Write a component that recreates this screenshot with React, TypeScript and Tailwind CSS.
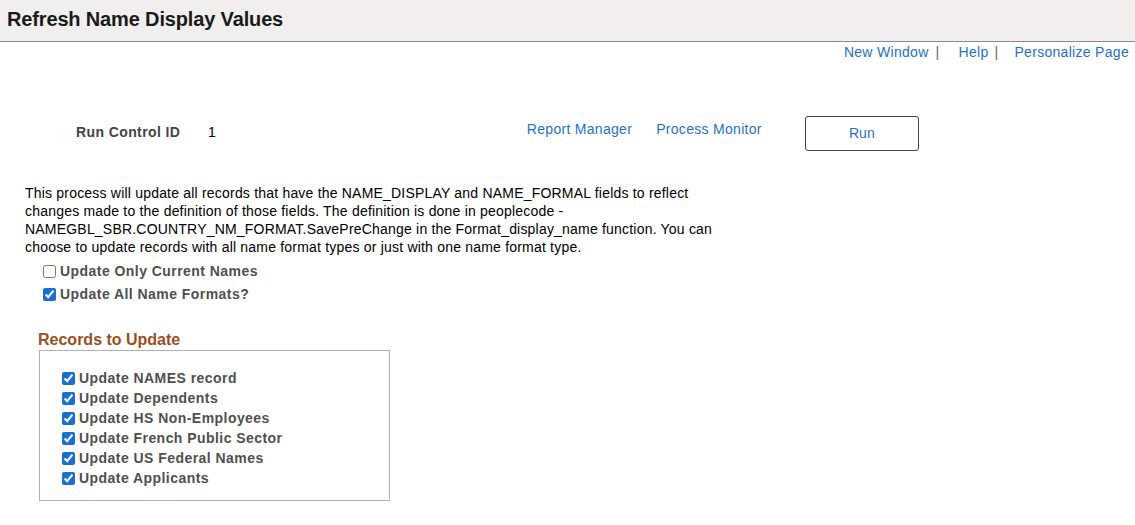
import { useState } from 'react';

const records = [
  'Update NAMES record',
  'Update Dependents',
  'Update HS Non-Employees',
  'Update French Public Sector',
  'Update US Federal Names',
  'Update Applicants',
];

const Check = ({ label, initial }: { label: string; initial: boolean }) => {
  const [checked, setChecked] = useState(initial);
  return (
    <label className="flex items-center gap-[4px] text-[14px] font-bold tracking-[0.45px] text-[#4f4f4f] leading-[20px]">
      <input
        type="checkbox"
        checked={checked}
        onChange={() => setChecked(!checked)}
        className="m-0 h-[13px] w-[13px] accent-[#1a6fd6]"
      />
      {label}
    </label>
  );
};

export default function App() {
  return (
    <div className="min-h-[525px] bg-white font-['Liberation_Sans',Arial,sans-serif] text-black">
      <div className="h-[42px] border-b border-[#8a8a8a] bg-[#f0efee] pl-[7px] pt-[6px]">
        <h1 className="text-[20px] font-bold leading-[26px] tracking-[-0.15px] text-[#1a1a1a]">Refresh Name Display Values</h1>
      </div>

      <div className="flex justify-end pr-[6px] pt-[1px] text-[14px] leading-[18px] tracking-[0.3px] text-[#1f72c6]">
        <a className="cursor-pointer">New Window</a>
        <span className="ml-[7px] mr-[19px] text-[#666]">|</span>
        <a className="cursor-pointer">Help</a>
        <span className="ml-[6px] mr-[16px] text-[#666]">|</span>
        <a className="cursor-pointer">Personalize Page</a>
      </div>

      <div className="mt-[53px] flex items-center">
        <div className="ml-[76px] w-[132px] text-[14px] font-bold tracking-[0.4px] text-[#444]">Run Control ID</div>
        <div className="text-[14px]">1</div>
        <a className="ml-[311px] -mt-[7px] cursor-pointer text-[14px] tracking-[0.3px] text-[#1f72c6]">Report Manager</a>
        <a className="ml-[24px] -mt-[7px] cursor-pointer text-[14px] tracking-[0.3px] text-[#1f72c6]">Process Monitor</a>
        <button className="ml-[43px] mt-[2px] h-[35px] w-[114px] rounded-[3px] border border-[#444] bg-white text-[14px] text-[#1f72c6]">
          Run
        </button>
      </div>

      <p className="ml-[25px] mt-[33px] w-[720px] text-[14px] leading-[18px] tracking-[0.2px]">
        This process will update all records that have the NAME_DISPLAY and NAME_FORMAL fields to reflect
        <br />
        changes made to the definition of those fields. The definition is done in peoplecode -
        <br />
        NAMEGBL_SBR.COUNTRY_NM_FORMAT.SavePreChange in the Format_display_name function. You can
        <br />
        choose to update records with all name format types or just with one name format type.
      </p>

      <div className="ml-[43px] mt-[5px] flex flex-col gap-[3px]">
        <Check label="Update Only Current Names" initial={false} />
        <Check label="Update All Name Formats?" initial={true} />
      </div>

      <h2 className="ml-[38px] mt-[26px] text-[16px] font-bold leading-[20px] text-[#98501f]">Records to Update</h2>
      <div className="ml-[39px] mt-0 h-[151px] w-[351px] border border-[#b0b0b0] pl-[22px] pt-[17px]">
        {records.map((r) => (
          <Check key={r} label={r} initial={true} />
        ))}
      </div>
    </div>
  );
}
